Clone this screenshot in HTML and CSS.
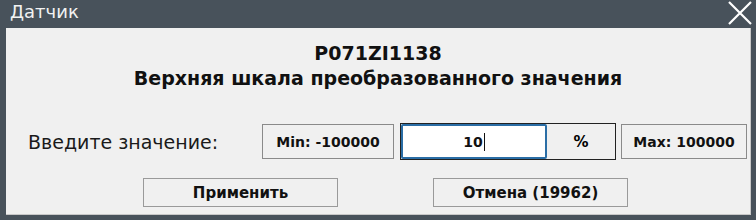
FILE: index.html
```html
<!DOCTYPE html>
<html lang="ru">
<head>
    <meta charset="UTF-8">
    <title>Датчик</title>
    <link rel="stylesheet" href="styles.css">
</head>
<body>
    <div class="window">
        <div class="titlebar">
            <span class="title">Датчик</span>
            <svg class="close" width="26" height="24" viewBox="0 0 26 24">
                <path d="M2 1 L24 23 M24 1 L2 23" stroke="#ffffff" stroke-width="2.2" fill="none"/>
            </svg>
        </div>
        <div class="panel">
            <div class="heading">
                <div>P071ZI1138</div>
                <div>Верхняя шкала преобразованного значения</div>
            </div>
            <div class="row">
                <span class="label">Введите значение:</span>
                <div class="box min">Min: -100000</div>
                <div class="entry">
                    <div class="input">10<span class="caret"></span></div>
                    <div class="unit">%</div>
                </div>
                <div class="box max">Max: 100000</div>
            </div>
            <div class="buttons">
                <button class="btn apply">Применить</button>
                <button class="btn cancel">Отмена (19962)</button>
            </div>
        </div>
    </div>
</body>
</html>
```

FILE: styles.css
```css
body {
    margin: 0;
    padding: 0;
    background-color: #48525b;
    font-family: "DejaVu Sans", Verdana, sans-serif;
}
.window {
    width: 756px;
    height: 220px;
    background: #48525b;
}
.titlebar {
    height: 27px;
    display: flex;
    justify-content: space-between;
    align-items: center;
    padding: 0 3px 0 10px;
}
.title {
    color: #f2f2f2;
    font-size: 18px;
    margin-top: -4px;
}
.close {
    margin-top: -2px;
}
.panel {
    margin: 1px 5px 0 6px;
    height: 186px;
    background: #f0f0f0;
    border-right: 1px solid #c8c8c8;
    border-bottom: 1px solid #c8c8c8;
}
.heading {
    text-align: center;
    font-weight: bold;
    font-size: 19px;
    line-height: 25px;
    color: #111;
    padding-top: 13px;
}
.row {
    display: flex;
    align-items: center;
    margin-top: 32px;
    padding-left: 22px;
}
.label {
    font-size: 19px;
    color: #1a1a1a;
    width: 234px;
}
.box {
    height: 35px;
    border: 1px solid #8a8a8a;
    box-sizing: border-box;
    display: flex;
    align-items: center;
    justify-content: center;
    font-weight: bold;
    font-size: 14px;
    color: #111;
}
.min {
    width: 132px;
}
.entry {
    display: flex;
    height: 37px;
    margin-left: 6px;
    border: 1px solid #222;
    box-sizing: border-box;
}
.input {
    width: 146px;
    background: #ffffff;
    border: 2px solid #2b6ea6;
    border-radius: 2px;
    box-sizing: border-box;
    display: flex;
    align-items: center;
    justify-content: center;
    font-weight: bold;
    font-size: 14px;
    color: #111;
}
.caret {
    display: inline-block;
    width: 1px;
    height: 18px;
    background: #111;
    margin-left: 1px;
}
.unit {
    width: 68px;
    display: flex;
    align-items: center;
    justify-content: center;
    font-weight: bold;
    font-size: 15px;
}
.max {
    width: 126px;
    margin-left: 5px;
}
.buttons {
    display: flex;
    gap: 95px;
    padding-left: 137px;
    margin-top: 18px;
}
.btn {
    width: 195px;
    height: 29px;
    background: #f0f0f0;
    border: 1px solid #9a9a9a;
    font-family: "DejaVu Sans", Verdana, sans-serif;
    font-weight: bold;
    font-size: 15px;
    color: #111;
    padding: 0;
}
```
